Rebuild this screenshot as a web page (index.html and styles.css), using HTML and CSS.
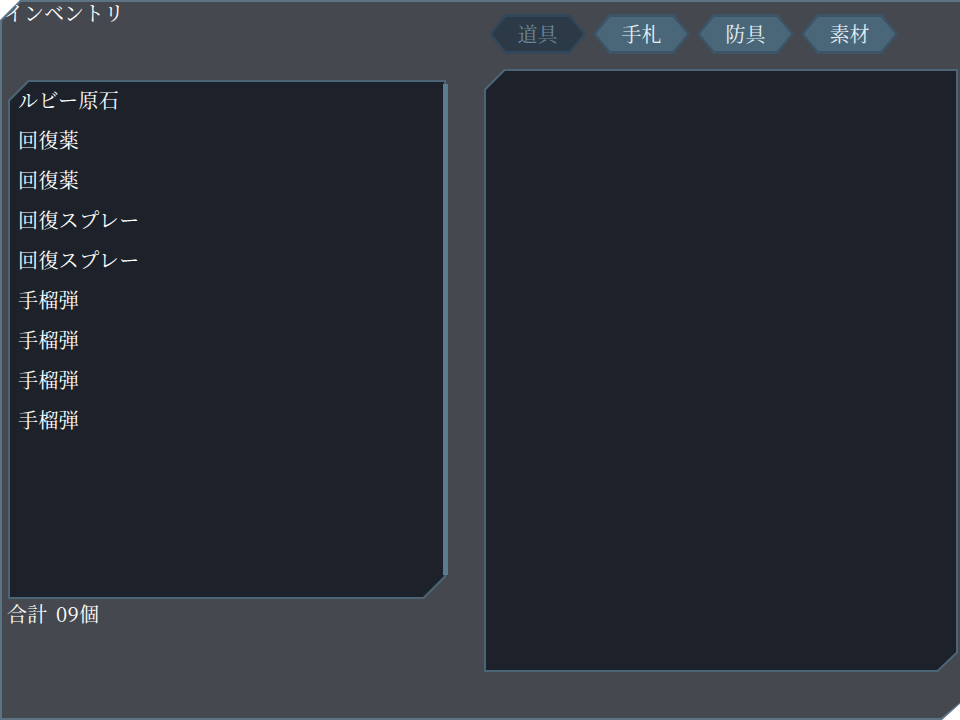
FILE: index.html
```html
<!DOCTYPE html>
<html lang="ja">
<head>
<meta charset="utf-8">
<title>インベントリ</title>
<link rel="stylesheet" href="styles.css">
</head>
<body>
<div class="frame">
  <div class="title">インベントリ</div>
  <div class="tabs">
    <div class="tab tab-dim"><div class="tab-fill">道具</div></div>
    <div class="tab"><div class="tab-fill">手札</div></div>
    <div class="tab"><div class="tab-fill">防具</div></div>
    <div class="tab"><div class="tab-fill">素材</div></div>
  </div>
  <div class="left">
    <div class="list-wrap">
      <div class="list">
        <div class="list-inner">
          <div class="item">ルビー原石</div>
          <div class="item">回復薬</div>
          <div class="item">回復薬</div>
          <div class="item">回復スプレー</div>
          <div class="item">回復スプレー</div>
          <div class="item">手榴弾</div>
          <div class="item">手榴弾</div>
          <div class="item">手榴弾</div>
          <div class="item">手榴弾</div>
        </div>
      </div>
      <div class="scrollbar"></div>
    </div>
    <div class="total">合計 09個</div>
  </div>
  <div class="detail"><div class="detail-inner"></div></div>
</div>
</body>
</html>
```
FILE: styles.css
```css
html, body {
  margin: 0;
  padding: 0;
  background: #ffffff;
}
body {
  font-family: "Noto Serif CJK JP", serif;
  color: #ffffff;
}
.frame {
  position: relative;
  width: 960px;
  height: 720px;
  box-sizing: border-box;
  padding: 2px 2px 2px 2px;
  display: grid;
  grid-template-columns: 482px 474px;
  grid-template-rows: 67px 1fr;
}
.frame::before,
.frame::after {
  content: "";
  position: absolute;
  z-index: 0;
}
.frame::before {
  inset: 0 -4px 0 0;
  background: #5c7383;
  clip-path: polygon(20px 0, 100% 0, 100% 700px, 942px 100%, 0 100%, 0 20px);
}
.frame::after {
  inset: 2px -4px 2px 2px;
  background: #45484e;
  clip-path: polygon(19px 0, 100% 0, 100% 697px, 939px 100%, 0 100%, 0 19px);
}
.frame > * {
  position: relative;
  z-index: 1;
}
.title {
  font-size: 20px;
  line-height: 22px;
  margin-left: 2px;
  margin-top: 0;
  letter-spacing: 0;
  white-space: nowrap;
}
.tabs {
  display: flex;
  gap: 7px;
  padding-top: 12px;
  padding-left: 5px;
  align-items: flex-start;
}
.tab {
  width: 97px;
  height: 40px;
  padding: 3px;
  box-sizing: border-box;
  background: #3c5465;
  clip-path: polygon(16px 0, 81px 0, 97px 20px, 81px 40px, 16px 40px, 0 20px);
}
.tab-fill {
  height: 100%;
  background: #4a6779;
  clip-path: polygon(14px 0, 77px 0, 91px 17px, 77px 34px, 14px 34px, 0 17px);
  display: flex;
  align-items: center;
  justify-content: center;
  font-size: 20px;
  line-height: 1;
  padding-bottom: 1px;
  box-sizing: border-box;
  color: #e4f0f6;
}
.tab-dim {
  background: #33475a;
}
.tab-dim .tab-fill {
  background: #2b3a46;
  color: #6d8898;
}
.left {
  padding-left: 6px;
  padding-top: 11px;
  display: flex;
  flex-direction: column;
}
.list-wrap {
  position: relative;
  width: 438px;
}
.list {
  height: 519px;
  padding: 2px;
  box-sizing: border-box;
  background: #4b6576;
  clip-path: polygon(20px 0, 100% 0, 100% 497px, 416px 100%, 0 100%, 0 20px);
}
.list-inner {
  height: 100%;
  background: #1d222a;
  clip-path: polygon(19px 0, 100% 0, 100% 494px, 413px 100%, 0 100%, 0 19px);
  padding-left: 8px;
  box-sizing: border-box;
}
.item {
  height: 40px;
  line-height: 35px;
  font-size: 20px;
  letter-spacing: 0.4px;
  white-space: nowrap;
}
.scrollbar {
  position: absolute;
  right: -2px;
  top: 4px;
  width: 5px;
  height: 491px;
  background: #5b7b90;
}
.total {
  font-size: 20px;
  line-height: 30px;
  margin-left: -1px;
  word-spacing: 3px;
  letter-spacing: 0.3px;
  white-space: nowrap;
}
.detail {
  width: 474px;
  height: 603px;
  padding: 2px;
  box-sizing: border-box;
  background: #4b6576;
  clip-path: polygon(20px 0, 100% 0, 100% 584px, 454px 100%, 0 100%, 0 20px);
}
.detail-inner {
  height: 100%;
  background: #1d222a;
  clip-path: polygon(19px 0, 100% 0, 100% 581px, 451px 100%, 0 100%, 0 19px);
}
```
